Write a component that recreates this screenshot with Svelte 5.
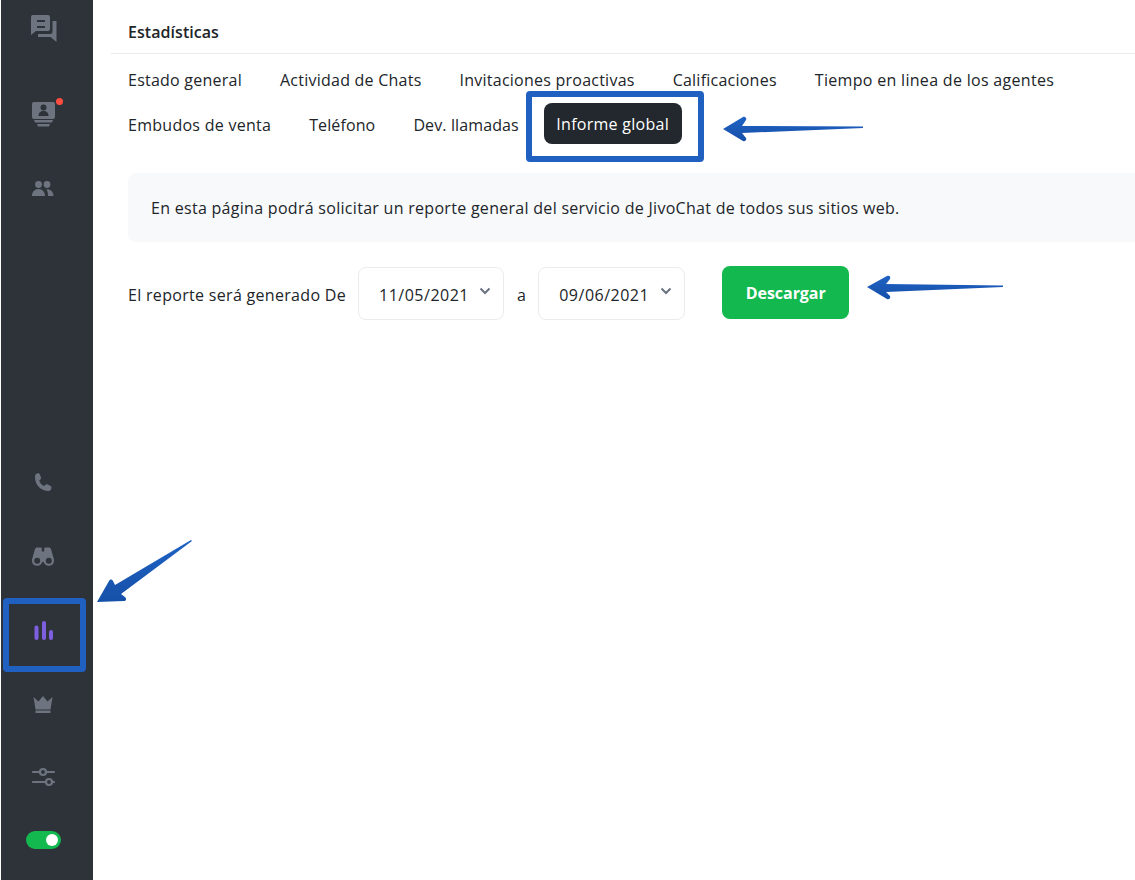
<script>
  const row1 = ['Estado general', 'Actividad de Chats', 'Invitaciones proactivas', 'Calificaciones', 'Tiempo en linea de los agentes'];
  const row2 = ['Embudos de venta', 'Teléfono', 'Dev. llamadas'];
</script>

<div class="app">
  <aside class="side">
    <div class="nav-top">
      <svg class="ic chat" width="28" height="28" viewBox="0 0 28 28"><path fill-rule="evenodd" d="M3 1h15a2 2 0 0 1 2 2v12a2 2 0 0 1-2 2H6l-5 4V3a2 2 0 0 1 2-2zM7 6v2h8V6zm0 6v2h8v-2z"/><path d="M22.5 7h4v21l-6-5H8v-3h12a2.5 2.5 0 0 0 2.5-2.5z"/></svg>
      <div class="agent">
        <svg class="ic" width="28" height="30" viewBox="0 0 28 30"><path fill-rule="evenodd" d="M5 3h19a2 2 0 0 1 2 2v13a2 2 0 0 1-2 2H5a2 2 0 0 1-2-2V5a2 2 0 0 1 2-2z"/><circle class="cut" cx="14.500" cy="8.500" r="3"/><path class="cut" d="M9.500 17c0-3.500 2-5 5-5s5 1.500 5 5z"/><path d="M5 21h19l-1 2.500H6zM8 25h13l-1 2.500H9z"/></svg>
        <span class="dot"></span>
      </div>
      <svg class="ic team" width="24" height="18" viewBox="0 0 24 18"><circle cx="7.500" cy="4.500" r="3.400"/><circle cx="16" cy="4.500" r="3.400"/><path d="M1 16c0-4 2.500-7 6.500-7s6.500 3 6.500 7zM15.500 9.200c4 0 7 2.600 7 6.800h-5.500c0-3-.4-4.700-1.500-6.800z"/></svg>
    </div>
    <div class="nav-bottom">
      <svg class="ic phone" width="22" height="22" viewBox="0 0 22 22"><path d="M5 1.500c1.500-.6 2.500 0 3 1.200l1 2.700c.3.900 0 1.700-.7 2.200L7.200 8.500c.8 2.600 2.700 4.600 5 5.500l1.200-1.100c.7-.6 1.500-.7 2.300-.3l2.500 1.200c1.200.6 1.600 1.500 1.100 2.900-.5 1.600-1.800 2.400-3.600 2.300C8 18 3 12.500 3 4.700c0-1.500.7-2.600 2-3.200z"/></svg>
      <svg class="ic bino" width="24" height="22" viewBox="0 0 24 22"><path fill-rule="evenodd" d="M6 1.500h3.500c.8 0 1.300.5 1.300 1.300v2.700h2.400V2.800c0-.8.500-1.300 1.300-1.300H18c1 0 1.600.6 2 1.600l2.700 9.400c.2.700.3 1.400.3 2.200a5.200 5.200 0 0 1-10.200 1.300h-1.600A5.200 5.200 0 0 1 1 14.700c0-.8.100-1.500.3-2.200L4 3.100c.4-1 1-1.600 2-1.600zM6.200 11.700a3 3 0 1 0 0 6 3 3 0 0 0 0-6zm11.600 0a3 3 0 1 0 0 6 3 3 0 0 0 0-6z"/></svg>
      <svg class="ic bars" width="22" height="22" viewBox="0 0 22 22"><rect x="1.500" y="5.500" width="4" height="14.500" rx="2"/><rect x="9" y="1" width="4" height="19" rx="2"/><rect x="16" y="10" width="4" height="10" rx="2"/></svg>
      <svg class="ic crown" width="22" height="20" viewBox="0 0 22 20"><path d="M1.500 2l5 4.500L11 1l4.500 5.500 5-4.500-2 12.500h-15zM3.500 15.500h15V18h-15z"/></svg>
      <svg class="ic sliders" width="24" height="20" viewBox="0 0 24 20"><g class="st"><path d="M1 5h6.500M14.500 5H22M1 15h12.500M20.500 15H22"/><circle cx="11" cy="5" r="3"/><circle cx="17" cy="15" r="3"/></g></svg>
      <span class="toggle"><span class="knob"></span></span>
    </div>
  </aside>

  <main class="main">
    <header class="head">Estadísticas</header>
    <div class="body">
      <nav class="tabs">
        {#each row1 as t}<span class="tab">{t}</span>{/each}
      </nav>
      <nav class="tabs second">
        {#each row2 as t}<span class="tab">{t}</span>{/each}
        <span class="tab active">Informe global</span>
      </nav>
      <p class="notice">En esta página podrá solicitar un reporte general del servicio de JivoChat de todos sus sitios web.</p>
      <div class="report">
        <span class="lbl first">El reporte será generado De</span>
        <span class="sel one"><span class="val">11/05/2021</span><svg width="12" height="8" viewBox="0 0 12 8"><path d="M1.500 1.500L6 6l4.500-4.500"/></svg></span>
        <span class="lbl">a</span>
        <span class="sel"><span class="val">09/06/2021</span><svg width="12" height="8" viewBox="0 0 12 8"><path d="M1.500 1.500L6 6l4.500-4.500"/></svg></span>
        <button class="dl">Descargar</button>
      </div>
    </div>
  </main>

  <svg class="annot" width="1135" height="880" viewBox="0 0 1135 880">
    <defs>
      <linearGradient id="ag" x1="0" y1="0" x2="0" y2="1"><stop offset="0" stop-color="#1f62c4"/><stop offset="1" stop-color="#1650a8"/></linearGradient>
    </defs>
    <rect class="box" x="529" y="94" width="172" height="65" rx="1"/>
    <rect class="box" x="6" y="601" width="77" height="68" rx="1"/>
    <path fill="url(#ag)" d="M723 129l20-12c2-1 4 1 3 3l-4 6 121 .5v1.500l-121 5 4 5c1 2-1 4-3 3z"/>
    <path fill="url(#ag)" d="M867 287l20-11c2-1 4 0 3 3l-4 5 117 1.500v1.500l-117 5 4 4c1 2-1 4-3 3z"/>
    <path fill="url(#ag)" d="M97 602l12-21c1-2 3-2 4 0l2 4 76-45 1 1-71 53 4 3c2 2 1 4-1 4z"/>
  </svg>
</div>

<style>
  :global(body) { margin: 0; background: #fff; }
  .app {
    position: relative;
    display: flex;
    width: 1135px;
    height: 880px;
    overflow: hidden;
    font-family: "Open Sans", "Noto Sans", sans-serif;
    font-size: 16px;
    letter-spacing: 0.27px;
    color: #212529;
  }
  .side {
    width: 92px;
    margin-left: 1px;
    flex: none;
    background: #2e3239;
    display: flex;
    flex-direction: column;
    justify-content: space-between;
    align-items: center;
    box-sizing: border-box;
  }
  .ic { display: block; fill: #6e747f; }
  .nav-top, .nav-bottom { display: flex; flex-direction: column; align-items: center; }
  .chat { margin-top: 14px; margin-left: -7px; }
  .agent { position: relative; margin-top: 57px; margin-left: -8px; }
  .cut { fill: #2e3239; }
  .dot { position: absolute; width: 7px; height: 7px; border-radius: 50%; background: #ff4d3f; left: 27px; top: -1px; }
  .team { margin-top: 51px; margin-left: -9px; }
  .phone { margin-left: -8px; }
  .bino { margin-top: 52px; margin-left: -9px; }
  .bars { margin-top: 52px; margin-left: -6px; fill: #7d5fe0; }
  .crown { margin-top: 53px; margin-left: -9px; }
  .sliders { margin-top: 52px; margin-left: -6px; }
  .st { fill: none; stroke: #6e747f; stroke-width: 2.200; stroke-linecap: round; }
  .toggle { display: flex; align-items: center; justify-content: flex-end; width: 35px; height: 18px; border-radius: 9px; background: #13b84f; margin-top: 44px; margin-bottom: 31px; margin-left: -7px; padding-right: 3px; box-sizing: border-box; }
  .knob { width: 12px; height: 12px; border-radius: 50%; background: #fff; }

  .main { flex: 1; min-width: 0; padding-left: 18px; }
  .head {
    height: 54px;
    box-sizing: border-box;
    padding: 21px 0 0 17px;
    line-height: 22px;
    font-weight: 600;
    letter-spacing: 0.05px;
    border-bottom: 1px solid #e9ecef;
  }
  .body { padding-left: 17px; }
  .tabs { display: flex; gap: 12px; margin: 5px 0 0 -13px; white-space: nowrap; letter-spacing: 0.24px; }
  .tabs.second { margin-top: 3px; letter-spacing: 0.27px; }
  .tab { height: 41px; line-height: 43px; padding: 0 13px; border-radius: 8px; }
  .tab:nth-child(5) { letter-spacing: 0.31px; }
  .second .tab { line-height: 44px; }
  .second .tab:nth-child(2), .second .tab:nth-child(3) { letter-spacing: 0.12px; }
  .second .active { background: #22282d; color: #fff; line-height: 42px; padding: 0 12.500px; }
  .notice {
    margin: 29px 0 0;
    width: 1100px;
    height: 69px;
    box-sizing: border-box;
    padding: 0 23px;
    line-height: 71px;
    letter-spacing: 0.29px;
    background: #f8f9fb;
    border-radius: 8px;
    white-space: nowrap;
  }
  .report { display: flex; align-items: flex-start; margin-top: 24px; }
  .lbl { margin-top: 19px; line-height: 20px; margin-right: 12px; white-space: nowrap; }
  .first { letter-spacing: 0.31px; }
  .sel {
    display: flex;
    justify-content: space-between;
    align-items: center;
    width: 147px;
    height: 53px;
    margin-top: 1px;
    margin-right: 13px;
    box-sizing: border-box;
    padding: 0 12px 0 20px;
    border: 1px solid #e9ecef;
    border-radius: 8px;
  }
  .one { width: 146px; }
  .val { padding-top: 2px; letter-spacing: 0.5px; }
  .sel svg { fill: none; stroke: #6b7280; stroke-width: 2; margin-top: -5px; }
  .dl {
    margin-left: 24px;
    width: 127px;
    height: 53px;
    border: 0;
    border-radius: 8px;
    background: #13b84f;
    color: #fff;
    font: 700 16px "Open Sans", "Noto Sans", sans-serif;
    letter-spacing: -0.05px;
  }
  .annot { position: absolute; left: 0; top: 0; pointer-events: none; }
  .box { fill: none; stroke: #1f60c0; stroke-width: 6; }
</style>
